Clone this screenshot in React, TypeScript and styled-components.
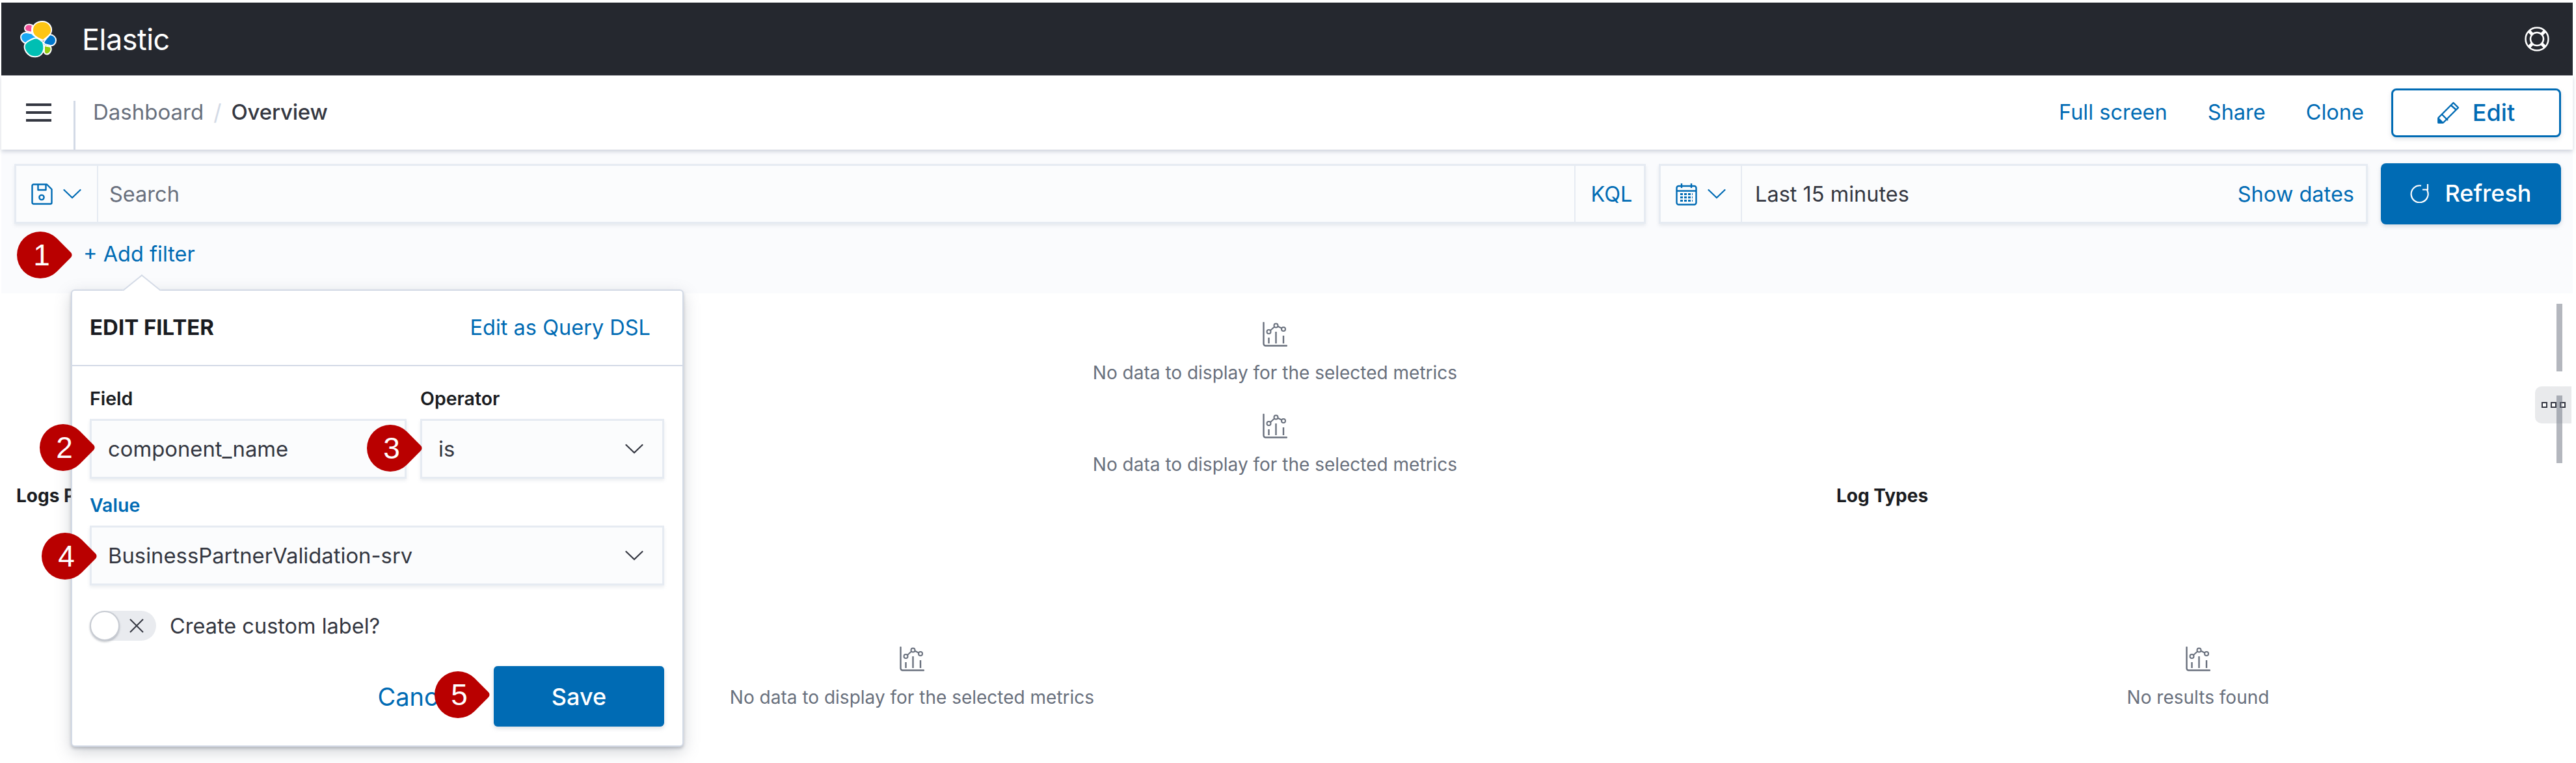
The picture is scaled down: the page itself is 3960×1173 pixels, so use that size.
import React from 'react';
import styled, { createGlobalStyle } from 'styled-components';

const GlobalStyle = createGlobalStyle`
    html, body {
        margin: 0;
        background: #fff;
    }
    * {
        box-sizing: border-box;
    }
`;

const BLUE = '#006bb4';

const Page = styled.div`
    position: relative;
    width: 3960px;
    height: 1173px;
    padding: 4px 5px 0 2px;
    overflow: hidden;
    font-family: Inter, 'Noto Sans', sans-serif;
    color: #343741;
`;

const Header = styled.header`
    height: 112px;
    background: #25282f;
    display: flex;
    align-items: center;
    padding: 0 36px 0 29px;
`;

const Brand = styled.span`
    margin-left: 38px;
    font-size: 45px;
    letter-spacing: -0.5px;
    color: #fff;
    flex: 1;
`;

const Nav = styled.nav`
    height: 114px;
    display: flex;
    align-items: center;
    padding-right: 18px;
    box-shadow: 0 3px 6px rgba(152, 162, 179, 0.45);
    position: relative;
`;

const MenuCell = styled.div`
    width: 114px;
    height: 75px;
    align-self: flex-end;
    border-right: 3px solid #d3dae6;
    padding: 4px 0 0 38px;
    display: flex;
    flex-direction: column;
    gap: 8px;
    & > i {
        display: block;
        width: 39px;
        height: 4px;
        background: #343741;
    }
`;

const Crumbs = styled.div`
    flex: 1;
    display: flex;
    align-items: center;
    padding-left: 27px;
    font-size: 33px;
    color: #69707d;
    margin-top: -2px;
`;

const Slash = styled.span`
    margin: 0 15px;
    color: #d3dae6;
    font-size: 34px;
`;

const Current = styled.span`
    color: #343741;
    font-weight: 500;
    letter-spacing: -0.2px;
`;

const ActionLink = styled.a`
    color: ${BLUE};
    font-size: 32.5px;
    margin-right: 62px;
    margin-top: -2px;
    &:nth-last-child(2) {
        margin-right: 42px;
    }
`;

const EditButton = styled.button`
    width: 261px;
    height: 75px;
    background: #fff;
    border: 3px solid ${BLUE};
    border-radius: 8px;
    color: ${BLUE};
    font: 500 36px Inter, sans-serif;
    display: flex;
    align-items: center;
    justify-content: center;
    gap: 20px;
    box-shadow: 0 3px 6px rgba(152, 162, 179, 0.3);
`;

const QueryBar = styled.section`
    height: 221px;
    background: #fafbfd;
    padding: 22px 18px 0 20px;
`;

const QueryRow = styled.div`
    display: flex;
    gap: 20px;
    height: 92px;
`;

const FieldBox = styled.div<{ $width?: number }>`
    display: flex;
    align-items: stretch;
    height: 92px;
    flex: ${(p) => (p.$width ? `0 0 ${p.$width}px` : '1')};
    background: #fbfcfd;
    border: 3px solid #e6ebf2;
    box-shadow: 0 3px 5px rgba(152, 162, 179, 0.18);
    font-size: 32.5px;
`;

const Prepend = styled.div<{ $width: number }>`
    width: ${(p) => p.$width}px;
    border-right: 2px solid #e6ebf2;
    display: flex;
    align-items: center;
    padding-left: 23px;
    gap: 16px;
    color: ${BLUE};
`;

const Placeholder = styled.div`
    flex: 1;
    padding-left: 17px;
    display: flex;
    align-items: center;
    color: #69707d;
`;

const Kql = styled.div`
    width: 107px;
    border-left: 2px solid #e6ebf2;
    padding-left: 6px;
    color: ${BLUE};
    display: flex;
    align-items: center;
    justify-content: center;
`;

const DateValue = styled.div`
    flex: 1;
    display: flex;
    align-items: center;
    justify-content: space-between;
    padding: 0 18px 0 20px;
    color: #343741;
    & > a {
        color: ${BLUE};
    }
`;

const RefreshButton = styled.button`
    flex: 0 0 277px;
    height: 94px;
    margin-top: -1px;
    padding-bottom: 3px;
    background: ${BLUE};
    border: 0;
    border-radius: 8px;
    color: #fff;
    font: 500 36px Inter, sans-serif;
    display: flex;
    align-items: center;
    justify-content: center;
    gap: 24px;
    box-shadow: 0 3px 6px rgba(152, 162, 179, 0.35);
`;

const AddFilter = styled.a`
    display: block;
    margin: 27px 0 0 106px;
    font-size: 32.5px;
    line-height: 40px;
    color: ${BLUE};
`;

const Dashboard = styled.main`
    position: relative;
`;

const WidePanel = styled.div`
    width: 3916px;
    padding-top: 44px;
    display: flex;
    flex-direction: column;
    gap: 45px;
`;

const BottomPanels = styled.div`
    display: grid;
    grid-template-columns: 2754px 1112px;
    column-gap: 44px;
    margin-top: 13px;
    padding-left: 23px;
`;

const PanelTitle = styled.h3`
    margin: 0 0 215px;
    font-size: 28px;
    line-height: 34px;
    font-weight: 700;
    color: #1a1c21;
`;

const Empty = styled.div`
    display: flex;
    flex-direction: column;
    align-items: center;
    gap: 22px;
    font-size: 28px;
    line-height: 36px;
    color: #69707d;
`;

const Thumb = styled.div<{ $top: number }>`
    position: absolute;
    left: 3930px;
    top: ${(p) => p.$top}px;
    width: 9px;
    height: 104px;
    background: rgba(105, 112, 125, 0.5);
`;

const Resizer = styled.div`
    position: absolute;
    left: 3897px;
    top: 594px;
    width: 56px;
    height: 57px;
    background: #e9eaec;
    border-radius: 10px 0 0 10px;
    display: flex;
    align-items: center;
    justify-content: center;
    gap: 5px;
    & > i {
        width: 9px;
        height: 9px;
        background: #fff;
        border: 2.5px solid #343741;
    }
`;

const Popover = styled.div`
    position: absolute;
    left: 109px;
    top: 445px;
    width: 942px;
    height: 703px;
    background: #fff;
    border: 2px solid #d3dae6;
    border-radius: 6px;
    box-shadow: 0 8px 24px rgba(105, 112, 125, 0.3), 0 3px 4px rgba(105, 112, 125, 0.35);
    &::before {
        content: '';
        position: absolute;
        left: 88px;
        top: -20px;
        width: 36px;
        height: 36px;
        background: #fff;
        border-left: 2px solid #d3dae6;
        border-top: 2px solid #d3dae6;
        transform: rotate(45deg) skew(-6deg, -6deg);
    }
`;

const PopoverHead = styled.div`
    position: relative;
    height: 116px;
    border-bottom: 2px solid #d3dae6;
    display: flex;
    align-items: center;
    justify-content: space-between;
    padding: 0 49px 2px 27px;
    font-size: 32.5px;
    & > strong {
        font-size: 33px;
        font-weight: 700;
        color: #1a1c21;
    }
    & > a {
        color: ${BLUE};
    }
`;

const PopoverBody = styled.div`
    padding: 35px 28px 0 27px;
`;

const FormRow = styled.div`
    display: grid;
    grid-template-columns: 487px 375px;
    column-gap: 21px;
`;

const Label = styled.label<{ $active?: boolean }>`
    display: block;
    height: 46px;
    font-size: 28.5px;
    line-height: 30px;
    font-weight: 600;
    color: ${(p) => (p.$active ? BLUE : '#1a1c21')};
`;

const Select = styled.div`
    height: 92px;
    background: #fbfcfd;
    border: 3px solid #e6ebf2;
    box-shadow: 0 3px 5px rgba(152, 162, 179, 0.18);
    display: flex;
    align-items: center;
    justify-content: space-between;
    padding: 0 29px 0 25px;
    font-size: 32.8px;
    color: #343741;
`;

const ValueRow = styled.div`
    margin-top: 26px;
`;

const ToggleRow = styled.div`
    margin-top: 39px;
    display: flex;
    align-items: center;
    gap: 21px;
    font-size: 32.5px;
    color: #343741;
`;

const Toggle = styled.div`
    width: 102px;
    height: 46px;
    border-radius: 23px;
    background: #e9ebef;
    display: flex;
    align-items: center;
    & > i {
        width: 46px;
        height: 46px;
        border-radius: 50%;
        background: #fff;
        border: 2px solid #c8ccd3;
        box-shadow: 0 2px 3px rgba(105, 112, 125, 0.4);
    }
    & > svg {
        margin-left: 14px;
    }
`;

const Footer = styled.div`
    margin-top: 39px;
    display: flex;
    justify-content: flex-end;
    align-items: center;
    gap: 54px;
    font-size: 38px;
    & > a {
        color: ${BLUE};
    }
`;

const SaveButton = styled.button`
    width: 262px;
    height: 93px;
    background: ${BLUE};
    border: 0;
    border-radius: 6px;
    color: #fff;
    font: 500 36px Inter, sans-serif;
    box-shadow: 0 3px 6px rgba(152, 162, 179, 0.35);
`;

// red callout: the square turned 45deg gives the point on the right
const Callout = styled.div<{ $x: number; $y: number }>`
    position: absolute;
    left: ${(p) => p.$x}px;
    top: ${(p) => p.$y}px;
    width: 74px;
    height: 74px;
    display: flex;
    align-items: center;
    justify-content: center;
    color: #fff;
    font: 46px 'Liberation Sans', sans-serif;
    &::before {
        content: '';
        position: absolute;
        inset: 1px;
        background: #b90000;
        border-radius: 50% 8% 50% 50%;
        transform: rotate(45deg);
    }
    & > span {
        position: relative;
        margin-left: 4px;
    }
`;

const Logo = () => (
    <svg width="57" height="57" viewBox="0 0 57 57">
        <g stroke="#fff" strokeWidth="2" strokeLinejoin="round">
            <path fill="#fec514" d="M19 16C18 6 26 1 34 1c9 0 15 7 14 15-.5 5-5 8-13 14-7-3-15-6-16-14z" />
            <path fill="#f04e98" d="M8 8c2-3 7-3 11-1-1 3-1.500 6-1 11l-8-2C7 15 6 11 8 8z" />
            <path fill="#1ba9f5" d="M10 18l8 1.500c2 3 5 4.500 8 6.500-6 2-12 4-17 9-5-2-8-5-8-10 0-4 4-7.500 9-7z" />
            <path fill="#00bfb3" d="M21 27c6-2 10 2.500 14 6 2 6 2 13-2 18-4 5-14 6-20 1C7 47 5 40 8 35c3-4 8-6 13-8z" />
            <path fill="#0077cc" d="M46 21c6 1 9 5 9 9 0 5-4 9-9 8l-8-2-2-3c3-5 7-9 10-12z" />
            <path fill="#93c90e" d="M37 38l10 2c2 5-1 11-6 11.500-3-.5-5-2.500-4-6.500z" />
        </g>
    </svg>
);

const LifeRing = () => (
    <svg width="38" height="38" viewBox="0 0 38 38" fill="none" stroke="#fff">
        <circle cx="19" cy="19" r="17.500" strokeWidth="2.500" />
        <circle cx="19" cy="19" r="10" strokeWidth="2.500" />
        <path strokeWidth="5" d="M7 7l5 5M31 7l-5 5M7 31l5-5M31 31l-5-5" />
    </svg>
);

const Chevron = ({ w = 28 }: { w?: number }) => (
    <svg width={w} height={w / 2 + 2} viewBox="0 0 28 16" fill="none" stroke="currentColor" strokeWidth="2.200" strokeLinecap="round">
        <path d="M1.500 2L14 14 26.500 2" />
    </svg>
);

const SaveIcon = () => (
    <svg width="33" height="33" viewBox="0 0 33 33" fill="none" stroke={BLUE} strokeWidth="2.400" strokeLinejoin="round">
        <path d="M3.500 1.500H24L31.500 9v20.500a2 2 0 0 1-2 2h-26a2 2 0 0 1-2-2v-26a2 2 0 0 1 2-2z" />
        <path d="M10.500 1.500V10h12V1.500" />
        <circle cx="16" cy="21.500" r="3.600" />
    </svg>
);

const CalendarIcon = () => (
    <svg width="33" height="35" viewBox="0 0 33 35" fill="none" stroke={BLUE} strokeWidth="2.400">
        <rect x="1.500" y="5" width="30" height="28.500" rx="3" />
        <path d="M1.500 12.500h30M9 1v7M24 1v7" />
        <path strokeWidth="3" strokeDasharray="4 2" d="M7 17.500h19M7 22.500h19M7 27.500h19" />
    </svg>
);

const PencilIcon = () => (
    <svg width="34" height="34" viewBox="0 0 34 34" fill="none" stroke={BLUE} strokeWidth="2.400" strokeLinejoin="round">
        <path d="M24.500 2L32 9.500 9 32.500 1.500 32.500 1.500 25z" />
        <path d="M7 20l9 9M21 6l8 7" />
        <path fill={BLUE} d="M1.500 26l6.500 6.500H1.500z" />
    </svg>
);

const RefreshIcon = () => (
    <svg width="29" height="30" viewBox="0 0 29 30" fill="none" stroke="#fff" strokeWidth="2.200">
        <path d="M17 3.500A13 13 0 1 0 26 10" />
        <path d="M27 1v8.500h-8" />
    </svg>
);

const ChartIcon = () => (
    <svg width="38" height="38" viewBox="0 0 38 38" fill="none" stroke="#69707d" strokeWidth="2">
        <path strokeWidth="2.400" strokeLinecap="round" d="M1.500 1v32.500a3 3 0 0 0 3 3H37" />
        <path d="M12 13l6-5.500M23 6.500l6 3" />
        <circle cx="9.500" cy="15" r="3" />
        <circle cx="20.500" cy="5.500" r="3" />
        <circle cx="32" cy="11" r="3" />
        <path strokeWidth="2.400" d="M9.500 24v9M20.500 15v18M32 21v12" />
    </svg>
);

const CloseMark = () => (
    <svg width="24" height="24" viewBox="0 0 24 24" fill="none" stroke="#343741" strokeWidth="2">
        <path d="M2 2l20 20M22 2L2 22" />
    </svg>
);

const NoData = ({ text = 'No data to display for the selected metrics' }: { text?: string }) => (
    <Empty>
        <ChartIcon />
        <span>{text}</span>
    </Empty>
);

const callouts = [
    { n: 1, x: 25, y: 355 },
    { n: 2, x: 60, y: 651 },
    { n: 3, x: 563, y: 652 },
    { n: 4, x: 63, y: 818 },
    { n: 5, x: 667, y: 1031 },
];

const App = () => {
    return (
        <Page>
            <GlobalStyle />
            <Header>
                <Logo />
                <Brand>Elastic</Brand>
                <LifeRing />
            </Header>
            <Nav>
                <MenuCell>
                    <i />
                    <i />
                    <i />
                </MenuCell>
                <Crumbs>
                    Dashboard
                    <Slash>/</Slash>
                    <Current>Overview</Current>
                </Crumbs>
                <ActionLink>Full screen</ActionLink>
                <ActionLink>Share</ActionLink>
                <ActionLink>Clone</ActionLink>
                <EditButton>
                    <PencilIcon />
                    Edit
                </EditButton>
            </Nav>
            <QueryBar>
                <QueryRow>
                    <FieldBox>
                        <Prepend $width={126}>
                            <SaveIcon />
                            <Chevron />
                        </Prepend>
                        <Placeholder>Search</Placeholder>
                        <Kql>KQL</Kql>
                    </FieldBox>
                    <FieldBox $width={1090}>
                        <Prepend $width={125}>
                            <CalendarIcon />
                            <Chevron />
                        </Prepend>
                        <DateValue>
                            Last 15 minutes
                            <a>Show dates</a>
                        </DateValue>
                    </FieldBox>
                    <RefreshButton>
                        <RefreshIcon />
                        Refresh
                    </RefreshButton>
                </QueryRow>
                <AddFilter>+ Add filter</AddFilter>
            </QueryBar>
            <Dashboard>
                <WidePanel>
                    <NoData />
                    <NoData />
                </WidePanel>
                <BottomPanels>
                    <div>
                        <PanelTitle>Logs P</PanelTitle>
                        <NoData />
                    </div>
                    <div>
                        <PanelTitle>Log Types</PanelTitle>
                        <NoData text="No results found" />
                    </div>
                </BottomPanels>
            </Dashboard>
            <Thumb $top={467} />
            <Resizer>
                <i />
                <i />
                <i />
            </Resizer>
            <Thumb $top={608} />
            <Popover>
                <PopoverHead>
                    <strong>EDIT FILTER</strong>
                    <a>Edit as Query DSL</a>
                </PopoverHead>
                <PopoverBody>
                    <FormRow>
                        <div>
                            <Label>Field</Label>
                            <Select>component_name</Select>
                        </div>
                        <div>
                            <Label>Operator</Label>
                            <Select>
                                is
                                <Chevron />
                            </Select>
                        </div>
                    </FormRow>
                    <ValueRow>
                        <Label $active>Value</Label>
                        <Select>
                            BusinessPartnerValidation-srv
                            <Chevron />
                        </Select>
                    </ValueRow>
                    <ToggleRow>
                        <Toggle>
                            <i />
                            <CloseMark />
                        </Toggle>
                        Create custom label?
                    </ToggleRow>
                    <Footer>
                        <a>Cancel</a>
                        <SaveButton>Save</SaveButton>
                    </Footer>
                </PopoverBody>
            </Popover>
            {callouts.map((c) => (
                <Callout key={c.n} $x={c.x} $y={c.y}>
                    <span>{c.n}</span>
                </Callout>
            ))}
        </Page>
    );
};

export default App;
